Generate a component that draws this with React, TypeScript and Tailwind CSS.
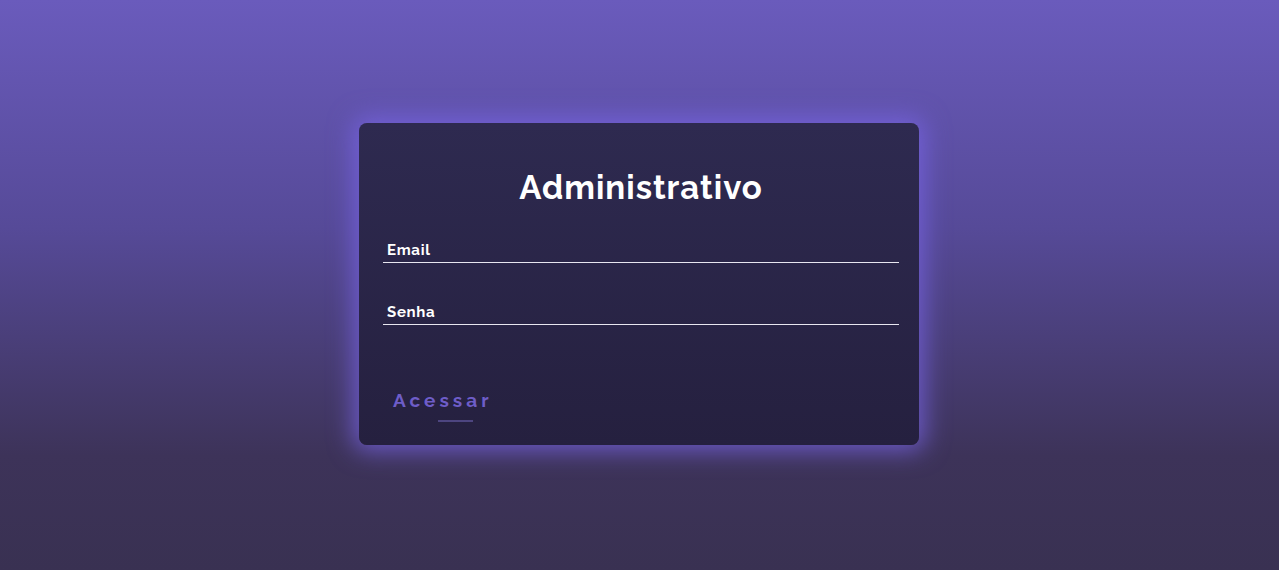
import React from "react";

export default function App() {
  return (
    <div
      className="w-full h-[570px] flex items-start justify-center pr-px bg-[linear-gradient(180deg,#6a5bbc_0%,#564a98_40%,#3d3359_80%,#393152_100%)]"
      style={{ fontFamily: "Raleway, Lato, 'Noto Sans', sans-serif" }}
    >
      <div className="mt-[123px] w-[560px] h-[322px] rounded-lg bg-[linear-gradient(180deg,#2e2a50_0%,#25203f_100%)] shadow-[0_0_25px_6px_rgba(120,100,230,0.75)] flex flex-col pl-6 pr-5">
        <h1 className="mt-[45px] text-center text-white text-[33px] leading-[40px] font-bold tracking-[1px]">
          Administrativo
        </h1>
        <div className="mt-[32px] border-b border-[#e8e6f0] pl-1 pb-[2px]">
          <label className="block text-white text-[15px] leading-[20px] font-bold tracking-[0.7px]">Email</label>
        </div>
        <div className="mt-[39px] border-b border-[#e8e6f0] pl-1 pb-[2px]">
          <label className="block text-white text-[15px] leading-[20px] font-bold tracking-[0.7px]">Senha</label>
        </div>
        <div className="mt-[63px] pl-[10px] flex flex-col items-start">
          <button className="text-[#6e5dc8] text-[19px] leading-[24px] font-bold tracking-[4px]">
            Acessar
          </button>
          <div className="ml-[45px] mt-[8px] w-[35px] h-[2px] bg-[#4d4580]" />
        </div>
      </div>
    </div>
  );
}
